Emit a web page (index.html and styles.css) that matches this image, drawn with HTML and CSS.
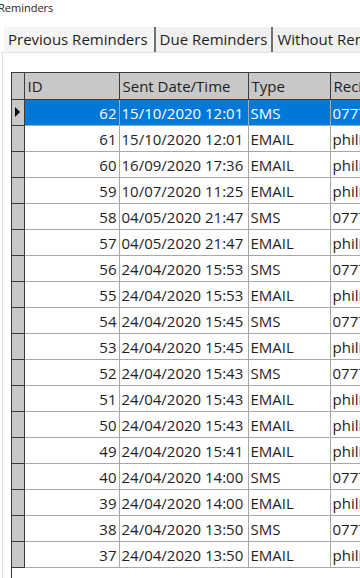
FILE: index.html
```html
<!DOCTYPE html>
<html lang="en">
<head>
  <meta charset="UTF-8">
  <meta name="viewport" content="width=device-width, initial-scale=1.0">
  <title>Reminders</title>
  <link rel="stylesheet" href="styles.css">
</head>
<body>
  <div class="window-title">Reminders</div>

  <div class="tabs">
    <div class="tab active">Previous Reminders</div>
    <div class="tab">Due Reminders</div>
    <div class="tab">Without Reminders</div>
  </div>

  <div class="panel">
    <div class="grid">
      <table>
        <colgroup>
          <col class="c-row">
          <col class="c-id">
          <col class="c-date">
          <col class="c-type">
          <col class="c-rec">
        </colgroup>
        <thead>
          <tr>
            <th class="row-head"></th>
            <th>ID</th>
            <th>Sent Date/Time</th>
            <th>Type</th>
            <th>Recipient</th>
          </tr>
        </thead>
        <tbody id="rows"></tbody>
      </table>
    </div>
  </div>

  <script>
    const reminders = [
      [62, '15/10/2020 12:01', 'SMS'],
      [61, '15/10/2020 12:01', 'EMAIL'],
      [60, '16/09/2020 17:36', 'EMAIL'],
      [59, '10/07/2020 11:25', 'EMAIL'],
      [58, '04/05/2020 21:47', 'SMS'],
      [57, '04/05/2020 21:47', 'EMAIL'],
      [56, '24/04/2020 15:53', 'SMS'],
      [55, '24/04/2020 15:53', 'EMAIL'],
      [54, '24/04/2020 15:45', 'SMS'],
      [53, '24/04/2020 15:45', 'EMAIL'],
      [52, '24/04/2020 15:43', 'SMS'],
      [51, '24/04/2020 15:43', 'EMAIL'],
      [50, '24/04/2020 15:43', 'EMAIL'],
      [49, '24/04/2020 15:41', 'EMAIL'],
      [40, '24/04/2020 14:00', 'SMS'],
      [39, '24/04/2020 14:00', 'EMAIL'],
      [38, '24/04/2020 13:50', 'SMS'],
      [37, '24/04/2020 13:50', 'EMAIL']
    ];

    // Build rows
    document.getElementById('rows').innerHTML = reminders.map((r, i) => `
      <tr class="${i === 0 ? 'selected' : ''}">
        <td class="row-head">${i === 0 ? '<span class="arrow"></span>' : ''}</td>
        <td class="num">${r[0]}</td>
        <td>${r[1]}</td>
        <td>${r[2]}</td>
        <td>${r[2] === 'SMS' ? '07771 234567' : 'philip@example.com'}</td>
      </tr>
    `).join('');
  </script>
</body>
</html>
```

FILE: styles.css
```css
body {
  margin: 0;
  background: #ffffff;
  color: #1e1e1e;
  font-family: "Open Sans", "Noto Sans", Arial, sans-serif;
  overflow: hidden;
  height: 578px;
}

.window-title {
  font-size: 11px;
  line-height: 16px;
  margin-left: -2px;
  padding-top: 0;
  height: 27px;
}

.tabs {
  display: flex;
  padding-left: 4px;
  height: 25px;
  border-bottom: 1px solid #e3e3e3;
  white-space: nowrap;
}

.tab {
  font-size: 15px;
  line-height: 24px;
  padding: 0 4px;
  background: #f0f0f0;
  border-right: 2px solid #707070;
}

.tab.active {
  background: #f5f5f5;
  padding: 0 6px 0 4px;
}

.panel {
  margin-left: 2px;
  border-left: 1px solid #dcdcdc;
  padding: 19px 0 0 8px;
  height: 540px;
}

.grid {
  border-left: 1px solid #3c3c3c;
  height: 100%;
}

table {
  border-collapse: collapse;
  table-layout: fixed;
  width: 420px;
  font-size: 15px;
}

.c-row { width: 12px; }
.c-id { width: 95px; }
.c-date { width: 129px; }
.c-type { width: 82px; }
.c-rec { width: 102px; }

th {
  background: #c8c8c8;
  font-weight: normal;
  text-align: left;
  height: 26px;
  padding: 0 3px;
  border-top: 1px solid #3c3c3c;
  border-left: 1px solid #3c3c3c;
  border-bottom: 1px solid #3c3c3c;
}

th.row-head {
  border-left: none;
}

td {
  height: 25px;
  padding: 0 2px;
  border-left: 1px solid #a8a8a8;
  border-bottom: 1px solid #a8a8a8;
  white-space: nowrap;
  overflow: hidden;
}

td.num {
  text-align: right;
}

td.row-head {
  background: #c8c8c8;
  border-left: none;
  border-right: 1px solid #3c3c3c;
  border-bottom: 1px solid #3c3c3c;
  position: relative;
  padding: 0;
}

tr.selected td {
  background: #0078d7;
  color: #ffffff;
}

tr.selected td.row-head {
  background: #c8c8c8;
}

.arrow {
  position: absolute;
  left: 3px;
  top: 7px;
  border-top: 5px solid transparent;
  border-bottom: 5px solid transparent;
  border-left: 5px solid #000000;
}
```
